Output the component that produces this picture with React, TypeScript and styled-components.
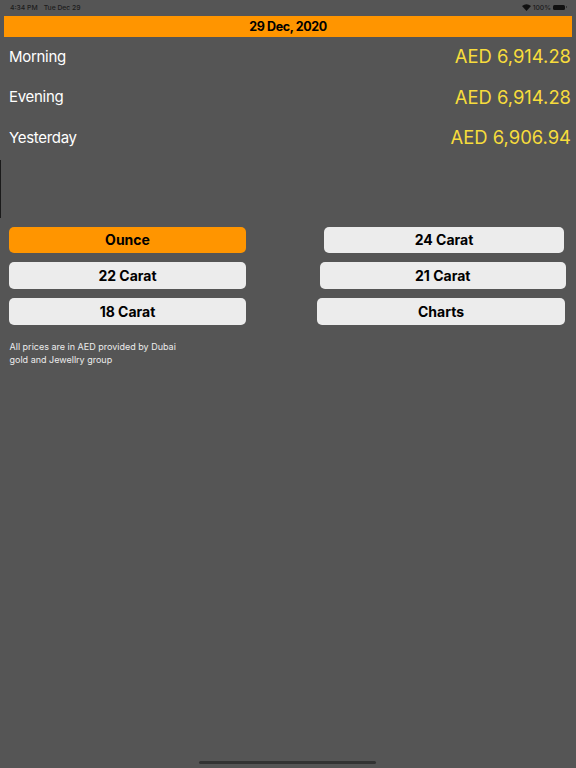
import React from "react"
import styled, { createGlobalStyle } from "styled-components"

const prices = [
  { label: "Morning", value: "AED 6,914.28" },
  { label: "Evening", value: "AED 6,914.28" },
  { label: "Yesterday", value: "AED 6,906.94" },
]

const buttons = [
  { left: "Ounce", right: "24 Carat", active: true, inset: 78, end: 12, height: 26 },
  { left: "22 Carat", right: "21 Carat", active: false, inset: 73.5, end: 10, height: 27 },
  { left: "18 Carat", right: "Charts", active: false, inset: 71, end: 11, height: 27 },
]

const GlobalStyle = createGlobalStyle`
  html, body {
    margin: 0;
    background: #555555;
  }
  body {
    font-family: Inter, "Liberation Sans", sans-serif;
  }
`

const Page = styled.div`
  width: 576px;
  height: 768px;
  background: #555555;
  position: relative;
  overflow: hidden;
  display: flex;
  flex-direction: column;
`

const StatusBar = styled.div`
  height: 16px;
  padding: 0 9px 2px 10px;
  box-sizing: border-box;
  display: flex;
  align-items: center;
  justify-content: space-between;
  font-size: 6.8px;
  font-weight: 500;
  color: #1c1c1c;
`

const StatusGroup = styled.div`
  display: flex;
  align-items: center;
  gap: 6px;
`

const StatusIcons = styled(StatusGroup)`
  gap: 2px;
`

const Battery = styled.div`
  width: 12px;
  height: 5px;
  border-radius: 1.5px;
  background: #111111;
  margin-right: 2px;
  position: relative;

  &::after {
    content: "";
    position: absolute;
    right: -2px;
    top: 1.5px;
    width: 1px;
    height: 2px;
    background: #333333;
  }
`

const DateBar = styled.div`
  height: 21px;
  margin: 0 4px;
  background: #ff9500;
  color: #000000;
  font-size: 12.5px;
  font-weight: 700;
  letter-spacing: -0.4px;
  line-height: 22px;
  text-align: center;
`

const PriceList = styled.div`
  display: flex;
  flex-direction: column;
  margin-top: -1px;
  padding: 0 5px 0 9px;
`

const PriceRow = styled.div`
  height: 40.5px;
  display: flex;
  align-items: center;
  justify-content: space-between;
  font-size: 15px;
`

const Label = styled.span`
  color: #ffffff;
  letter-spacing: -0.3px;
`

const Amount = styled.span`
  color: #f7dc3c;
  font-size: 18.4px;
`

const ChartStub = styled.div`
  width: 1px;
  height: 58px;
  margin-top: 2px;
  background: #1a1a1a;
`

const ButtonGrid = styled.div`
  margin-top: 9px;
  display: flex;
  flex-direction: column;
  gap: 9px;
`

const ButtonRow = styled.div`
  display: flex;
`

const LeftCell = styled.div`
  width: 288px;
  padding-left: 9px;
  box-sizing: border-box;
`

const RightCell = styled.div<{ $inset: number; $end: number }>`
  width: 288px;
  padding-left: ${p => p.$inset - 42}px;
  padding-right: ${p => p.$end}px;
  box-sizing: border-box;
  display: flex;
`

const PriceButton = styled.button<{ $active?: boolean; $height: number; $wide?: boolean }>`
  width: ${p => (p.$wide ? "100%" : "237px")};
  height: ${p => p.$height}px;
  border: 0;
  padding: 0;
  border-radius: 5px;
  background: ${p => (p.$active ? "#ff9500" : "#ececec")};
  color: #000000;
  font-family: inherit;
  font-size: 14px;
  font-weight: 700;
`

const Note = styled.p`
  margin: 15px 0 0 9.5px;
  width: 180px;
  color: #ececec;
  font-size: 9px;
  line-height: 13.5px;
`

const HomeIndicator = styled.div`
  position: absolute;
  left: 199px;
  bottom: 4px;
  width: 177px;
  height: 3px;
  border-radius: 2px;
  background: #333333;
`

const App = () => {
  return (
    <>
      <GlobalStyle />
      <Page>
        <StatusBar>
          <StatusGroup>
            <span>4:34 PM</span>
            <span>Tue Dec 29</span>
          </StatusGroup>
          <StatusIcons>
            <svg width="9" height="7" viewBox="0 0 18 14">
              <path d="M9 14 L0 4 Q9 -3 18 4 Z" fill="#111111" />
            </svg>
            <span>100%</span>
            <Battery />
          </StatusIcons>
        </StatusBar>
        <DateBar>29 Dec, 2020</DateBar>
        <PriceList>
          {prices.map(row => (
            <PriceRow key={row.label}>
              <Label>{row.label}</Label>
              <Amount>{row.value}</Amount>
            </PriceRow>
          ))}
        </PriceList>
        <ChartStub />
        <ButtonGrid>
          {buttons.map(row => (
            <ButtonRow key={row.left}>
              <LeftCell>
                <PriceButton $active={row.active} $height={row.height}>
                  {row.left}
                </PriceButton>
              </LeftCell>
              <RightCell $inset={row.inset} $end={row.end}>
                <PriceButton $wide $height={row.height}>
                  {row.right}
                </PriceButton>
              </RightCell>
            </ButtonRow>
          ))}
        </ButtonGrid>
        <Note>All prices are in AED provided by Dubai gold and Jewellry group</Note>
        <HomeIndicator />
      </Page>
    </>
  )
}

export default App
